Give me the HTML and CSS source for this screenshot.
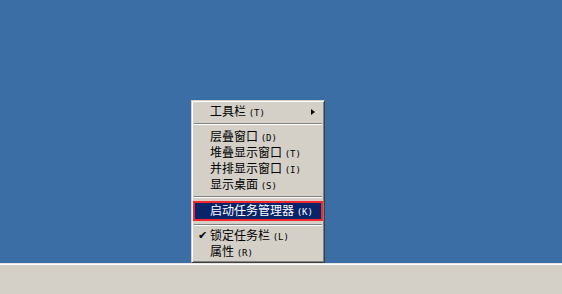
FILE: index.html
```html
<!DOCTYPE html>
<html lang="zh-CN">
<head>
<meta charset="utf-8">
<title>任务栏菜单</title>
<link rel="stylesheet" href="styles.css">
</head>
<body>
<div class="screen">
  <div class="desktop"></div>
  <div class="taskbar"></div>
  <div class="menu">
    <div class="item has-sub"><span class="label">工具栏 <span class="key">(T)</span></span><span class="arrow"></span></div>
    <div class="sep"></div>
    <div class="item"><span class="label">层叠窗口 <span class="key">(D)</span></span></div>
    <div class="item"><span class="label">堆叠显示窗口 <span class="key">(T)</span></span></div>
    <div class="item"><span class="label">并排显示窗口 <span class="key">(I)</span></span></div>
    <div class="item"><span class="label">显示桌面 <span class="key">(S)</span></span></div>
    <div class="sep sep-before-hi"></div>
    <div class="item active"><span class="label">启动任务管理器 <span class="key">(K)</span></span></div>
    <div class="sep sep-after-hi"></div>
    <div class="item checked"><span class="check">✔</span><span class="label">锁定任务栏 <span class="key">(L)</span></span></div>
    <div class="item"><span class="label">属性 <span class="key">(R)</span></span></div>
  </div>
</div>
</body>
</html>
```

FILE: styles.css
```css
html, body {
  margin: 0;
  padding: 0;
}
body {
  width: 562px;
  height: 294px;
  overflow: hidden;
  font-family: "Noto Sans CJK SC", "DejaVu Sans", sans-serif;
  font-size: 12px;
}
.screen {
  position: relative;
  width: 562px;
  height: 294px;
  display: flex;
  flex-direction: column;
}
.desktop {
  height: 263px;
  background: #3a6ea5;
}
.taskbar {
  flex: 1;
  background: #d4d0c8;
  border-top: 1px solid #e8e6e0;
  box-shadow: inset 0 1px 0 #ffffff;
}
.menu {
  position: absolute;
  left: 191px;
  top: 100px;
  width: 134px;
  height: 163px;
  box-sizing: border-box;
  background: #d4d0c8;
  border-top: 1px solid #d4d0c8;
  border-left: 1px solid #d4d0c8;
  border-right: 1px solid #404040;
  border-bottom: 1px solid #404040;
  box-shadow: inset 1px 1px 0 #ffffff, inset -1px -1px 0 #808080;
  padding: 3px 3px 2px 3px;
  display: flex;
  flex-direction: column;
  color: #000;
}
.item {
  position: relative;
  height: 16px;
  line-height: 16px;
  padding-left: 15px;
  white-space: nowrap;
  display: flex;
  align-items: center;
}
.key {
  font-family: "DejaVu Sans Mono", "Liberation Mono", monospace;
  font-size: 9px;
}
.arrow {
  position: absolute;
  right: 6px;
  top: 5px;
  width: 0;
  height: 0;
  border-top: 3px solid transparent;
  border-bottom: 3px solid transparent;
  border-left: 4px solid #000;
}
.sep {
  height: 9px;
  box-sizing: border-box;
  padding-top: 3px;
}
.sep::before {
  content: "";
  display: block;
  height: 0;
  border-top: 1px solid #808080;
  border-bottom: 1px solid #ffffff;
  margin: 0 -1px;
}
.sep-before-hi {
  height: 10px;
}
.sep-after-hi {
  height: 8px;
  padding-top: 4px;
}
.item.active {
  background: #0a246a;
  color: #ffffff;
  outline: 2px solid #f5262b;
  margin: 1px 0;
}
.check {
  position: absolute;
  left: 3px;
  top: 0;
  font-family: "DejaVu Sans", sans-serif;
  font-size: 11px;
}
```
